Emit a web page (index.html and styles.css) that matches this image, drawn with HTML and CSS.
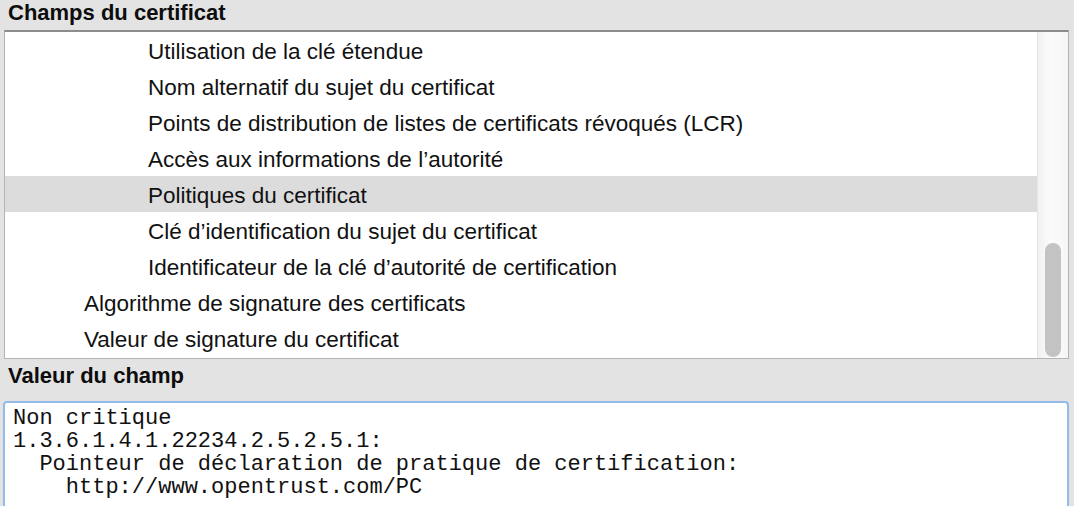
FILE: index.html
```html
<!DOCTYPE html>
<html lang="fr">
<head>
<meta charset="utf-8">
<title>Champs du certificat</title>
<link rel="stylesheet" href="styles.css">
</head>
<body>
  <div class="panel">
    <div class="section-title">Champs du certificat</div>
    <div class="field-list">
      <div class="rows">
        <div class="row level-2">Utilisation de la clé étendue</div>
        <div class="row level-2">Nom alternatif du sujet du certificat</div>
        <div class="row level-2">Points de distribution de listes de certificats révoqués (LCR)</div>
        <div class="row level-2">Accès aux informations de l’autorité</div>
        <div class="row level-2 selected">Politiques du certificat</div>
        <div class="row level-2">Clé d’identification du sujet du certificat</div>
        <div class="row level-2">Identificateur de la clé d’autorité de certification</div>
        <div class="row level-1">Algorithme de signature des certificats</div>
        <div class="row level-1">Valeur de signature du certificat</div>
      </div>
      <div class="scrollbar">
        <div class="thumb"></div>
      </div>
    </div>
    <div class="section-title second">Valeur du champ</div>
    <div class="field-value">Non critique
1.3.6.1.4.1.22234.2.5.2.5.1:
  Pointeur de déclaration de pratique de certification:
    http://www.opentrust.com/PC</div>
  </div>
</body>
</html>
```

FILE: styles.css
```css
html, body {
  margin: 0;
  padding: 0;
  height: 100%;
  overflow: hidden;
}

body {
  background: #e3e3e3;
  font-family: "Liberation Sans", Arial, Helvetica, sans-serif;
  color: #111;
}

.panel {
  display: flex;
  flex-direction: column;
  height: 100%;
}

.section-title {
  font-weight: bold;
  font-size: 22px;
  line-height: 26px;
  height: 30px;
  box-sizing: border-box;
  padding-left: 8px;
  color: #0d0d0d;
}

.section-title.second {
  height: 42px;
  padding-top: 4px;
}

/* list of certificate fields */
.field-list {
  display: flex;
  margin: 0 5px 0 4px;
  height: 329px;
  box-sizing: border-box;
  border: 1px solid #b4b4b4;
  border-top: 2px solid #8c8c8c;
  background: #fff;
}

.rows {
  flex: 1;
  overflow: hidden;
}

.row {
  height: 36px;
  box-sizing: border-box;
  padding-top: 4px;
  font-size: 22.5px;
  line-height: 32px;
  white-space: nowrap;
  color: #111;
}

.row.level-1 {
  padding-left: 79px;
}

.row.level-2 {
  padding-left: 143px;
}

.row.selected {
  background: #dcdcdc;
}

.scrollbar {
  width: 31px;
  box-sizing: border-box;
  border-left: 1px solid #e6e6e6;
  background: linear-gradient(to right, #f1f1f1, #fbfbfb 40%, #f6f6f6);
  display: flex;
  flex-direction: column;
  justify-content: flex-end;
}

.thumb {
  width: 16px;
  height: 114px;
  margin: 0 0 1px 7px;
  border-radius: 8px;
  background: #c3c3c3;
}

/* value of the selected field */
.field-value {
  flex: 1;
  margin: 0 5px 0 3px;
  border: 2px solid #93bbe9;
  border-bottom: none;
  border-radius: 4px 4px 0 0;
  background: #fff;
  padding: 4px 8px 0 8px;
  font-family: "Liberation Mono", "Courier New", monospace;
  font-size: 22px;
  line-height: 23px;
  white-space: pre;
  color: #111;
}
```
